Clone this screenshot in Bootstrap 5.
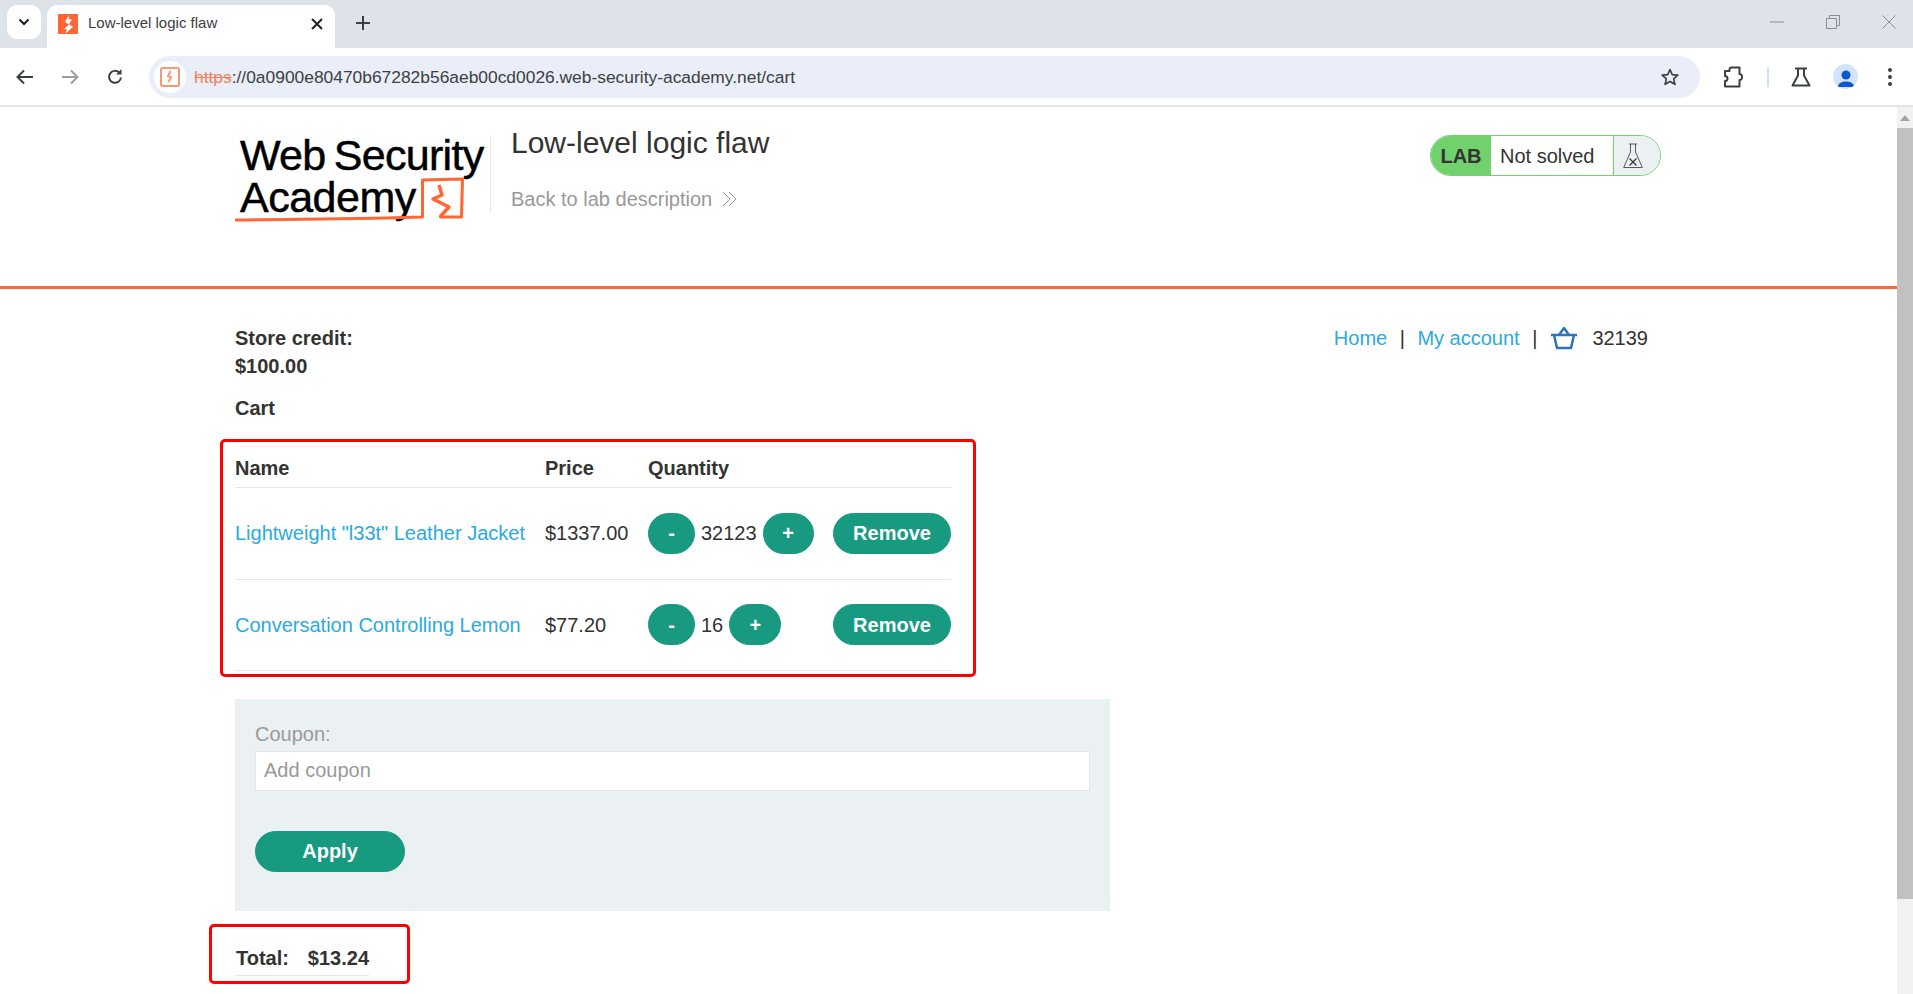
<!DOCTYPE html>
<html lang="en">
<head>
    <meta charset="UTF-8">
    <meta name="viewport" content="width=device-width, initial-scale=1">
    <title>Low-level logic flaw</title>
    <link href="https://cdn.jsdelivr.net/npm/bootstrap@5.3.3/dist/css/bootstrap.min.css" rel="stylesheet">
    <style>
        html, body { height: 100%; overflow: hidden; }
        body { font-family: "Liberation Sans", Arial, sans-serif; font-size: 20px; color: #333332; background: #fff; }

        .tab-strip { height: 48px; background: #dee3ea; padding-left: 7px; }
        .tab-menu { width: 34px; height: 34px; margin-top: 5px; background: #fff; border-radius: 10px; }
        .tab-item { width: 288px; height: 43px; margin-top: 5px; margin-left: 6px; padding: 0 12px 6px 11px; background: #fff; border-radius: 10px 10px 0 0; font-size: 15px; color: #3c4043; }
        .tab-title { margin-left: 10px; }
        .new-tab { margin-left: 21px; margin-top: 5px; height: 36px; }
        .win-btns { margin-left: auto; height: 44px; padding-right: 17px; gap: 42px; }

        .tool-bar { height: 59px; background: #fff; border-bottom: 2px solid #e3e3e3; padding: 0 10px 0 16px; border-radius: 8px 8px 0 0; }
        .nav-icons { gap: 27px; width: 133px; }
        .url-bar { width: 1551px; height: 42px; background: #e9eef8; border-radius: 21px; padding: 0 20px 0 5px; font-size: 17.4px; color: #3c4043; }
        .url-site { width: 32px; height: 32px; border-radius: 50%; background: #fff; margin-right: 8px; }
        .url-text { padding-top: 1px; }
        .url-scheme { color: #f0845c; text-decoration: line-through; }
        .tool-right { margin-left: 23px; gap: 22px; flex: 1; }
        .tool-sep { width: 2px; height: 20px; background: #cfe0f7; }
        .avatar { width: 25px; height: 25px; border-radius: 50%; background: #d3e3fd; overflow: hidden; }

        .page-wrap { height: 887px; }
        .page-main { flex: 1; min-width: 0; }
        .scroll-track { width: 16px; background: #f1f1f1; }
        .scroll-up { height: 21px; }
        .scroll-thumb { height: 771px; background: #c1c1c1; }

        .lab-head { height: 182px; border-bottom: 3px solid #ff6633; padding: 0 235px; }
        .logo-box { width: 255px; margin-top: 25px; height: 95px; }
        .logo-sep { width: 1px; height: 78px; background: #e6e6e6; margin-top: 28px; margin-right: 20px; }
        .lab-title { font-size: 30px; font-weight: 400; margin: 17px 0 0; line-height: 38px; color: #333332; }
        .back-link { color: #999; margin-top: 25px; line-height: 24px; }
        .back-arrows { margin-left: 10px; }
        .lab-status { margin: 28px 1px 0 auto; height: 41px; width: 231px; border: 1px solid #70d16d; border-radius: 21px; overflow: hidden; }
        .lab-tag { width: 60px; background: #70d16d; font-weight: 700; }
        .lab-state { flex: 1; padding-left: 9px; border-right: 1px solid #70d16d; }
        .lab-flask { width: 46px; background: #ebf0f2; padding-right: 9px; }

        .lab-body { padding: 0 235px; }
        .top-row { padding-top: 35px; line-height: 28px; }
        .shop-nav { gap: 12.5px; padding-right: 14px; height: 28px; }
        .shop-nav a, .cart-table a { color: #29abe0; text-decoration: none; }
        .strong-text { font-weight: 700; }
        .cart-title { margin-top: 14px; line-height: 28px; }
        .qty-total { margin-left: 2px; }

        .red-mark { border: 3px solid #f00; border-radius: 5px; }
        .table-mark { width: 756px; margin: 17px 0 0 -15px; padding: 0 22px 3px 12px; }
        .cart-table { --bs-table-color: #333332; margin: 0; width: 100%; vertical-align: middle; }
        .cart-table th, .cart-table td { padding: 0; border-color: #e6e6e6; border-bottom-width: 1px; }
        .cart-table th { height: 45px; padding-bottom: 4px; }
        .name-col { width: 310px; }
        .price-col { width: 103px; }
        .cart-table td { height: 92px; }
        .cart-table tr:last-child td { height: 91px; }
        .qty-cell { gap: 6px; }
        .pill-btn { --bs-btn-color: #fff; --bs-btn-bg: #189a81; --bs-btn-border-color: #189a81; --bs-btn-hover-color: #fff; --bs-btn-hover-bg: #158a73; --bs-btn-font-weight: 700; --bs-btn-font-size: 20px; --bs-btn-padding-y: 0; height: 41px; border-radius: 21px; line-height: 38px; }
        .btn-minus { width: 47px; padding: 0; }
        .btn-plus { width: 51px; padding: 0; }
        .btn-plus-s { width: 52px; padding: 0; }
        .btn-remove { width: 118px; padding: 0; }

        .coupon-box { width: 875px; height: 212px; margin-top: 22px; padding: 21px 20px 0; background: #ebf0f2; }
        .coupon-label { color: #999; line-height: 28px; margin: 0 0 3px; display: block; }
        .coupon-input { height: 40px; border: 1px solid #e6e6e6; border-radius: 0; padding: 0 8px; font-size: 20px; color: #333332; }
        .coupon-input::placeholder { color: #999; }
        .btn-apply { width: 150px; padding: 0; margin-top: 40px; display: block; }

        .total-mark { width: 201px; height: 60px; margin: 13px 0 0 -26px; padding: 17px 0 0 24px; }
        .total-row { width: 133px; line-height: 28px; padding-bottom: 3px; border-bottom: 1px solid #e6e6e6; font-weight: 700; font-size: 20px; }
    </style>
</head>
<body>
    <div class="tab-strip d-flex">
        <div class="tab-menu d-flex align-items-center justify-content-center">
            <svg width="12" height="8" viewBox="0 0 12 8"><path d="M1.5 1.5 6 6l4.5-4.5" fill="none" stroke="#1f1f1f" stroke-width="2"/></svg>
        </div>
        <div class="tab-item d-flex align-items-center">
            <svg width="20" height="20" viewBox="0 0 20 20"><rect width="20" height="20" fill="#ff6633"/><path d="M11 1 7 8l4 2.500L6 15l3 .5-1.500 4L15 13l-4-3 3-4.500-3.500-.5z" fill="#fff"/></svg>
            <span class="tab-title">Low-level logic flaw</span>
            <svg class="ms-auto" width="12" height="12" viewBox="0 0 12 12"><path d="M1 1l10 10M11 1 1 11" stroke="#1f1f1f" stroke-width="2"/></svg>
        </div>
        <div class="new-tab d-flex align-items-center">
            <svg width="14" height="14" viewBox="0 0 14 14"><path d="M7 0v14M0 7h14" stroke="#3c4043" stroke-width="2"/></svg>
        </div>
        <div class="win-btns d-flex align-items-center">
            <svg width="14" height="2" viewBox="0 0 14 2"><path d="M0 1h14" stroke="#8a8d91" stroke-width="1"/></svg>
            <svg width="14" height="14" viewBox="0 0 14 14"><path d="M.5 3.500h10v10H.5zM3.500 3V.5h10v10H11" fill="none" stroke="#8a8d91"/></svg>
            <svg width="14" height="14" viewBox="0 0 14 14"><path d="M.5.5l13 13M13.500.5l-13 13" stroke="#8a8d91"/></svg>
        </div>
    </div>

    <div class="tool-bar d-flex align-items-center">
        <div class="nav-icons d-flex align-items-center">
            <svg width="18" height="16" viewBox="0 0 18 16"><path d="M17 8H2M8 1.500 1.500 8 8 14.500" fill="none" stroke="#3c4043" stroke-width="2"/></svg>
            <svg width="18" height="16" viewBox="0 0 18 16"><path d="M1 8h15M10 1.500 16.500 8 10 14.500" fill="none" stroke="#9a9da1" stroke-width="2"/></svg>
            <svg width="18" height="18" viewBox="0 0 18 18"><path d="M15 9.500A6 6 0 1 1 13.200 4.500" fill="none" stroke="#3c4043" stroke-width="2"/><path d="M15.500 1v5.500H10z" fill="#3c4043"/></svg>
        </div>
        <div class="url-bar d-flex align-items-center">
            <div class="url-site d-flex align-items-center justify-content-center">
                <svg width="20" height="20" viewBox="0 0 20 20"><rect x="1" y="1" width="18" height="18" rx="1.500" fill="none" stroke="#f79a74" stroke-width="2"/><path d="M10.500 4 8 9l3 1.500L8.500 15" fill="none" stroke="#f79a74" stroke-width="2"/></svg>
            </div>
            <span class="url-text"><span class="url-scheme">https</span>://0a0900e80470b67282b56aeb00cd0026.web-security-academy.net/cart</span>
            <svg class="ms-auto" width="20" height="20" viewBox="0 0 24 24"><path d="M12 3l2.700 6.200 6.700.6-5 4.400 1.500 6.600L12 17.300l-5.900 3.500 1.500-6.600-5-4.400 6.700-.6z" fill="none" stroke="#3c4043" stroke-width="2" stroke-linejoin="round"/></svg>
        </div>
        <div class="tool-right d-flex align-items-center">
            <svg width="22" height="22" viewBox="0 0 22 22"><path d="M2 5h4.500V3a2 2 0 0 1 2-1.500h8V8a2.500 2.500 0 0 1 2.500 3 2.500 2.500 0 0 1-2.500 3v6.500H2V15a2.500 2.500 0 0 0 0-5z" fill="none" stroke="#3c4043" stroke-width="2" stroke-linejoin="round"/></svg>
            <div class="tool-sep"></div>
            <svg width="20" height="20" viewBox="0 0 20 20"><path d="M4 1.500h12M7 1.500v7L1.500 18.500h17L13 8.500v-7" fill="none" stroke="#3c4043" stroke-width="2" stroke-linejoin="round"/></svg>
            <div class="avatar d-flex align-items-end justify-content-center">
                <svg width="20" height="22" viewBox="0 0 20 22"><circle cx="10" cy="8" r="4.500" fill="#0b57d0"/><path d="M2 20c0-4 4-5.500 8-5.500s8 1.500 8 5.500z" fill="#0b57d0"/></svg>
            </div>
            <svg class="ms-2" width="4" height="18" viewBox="0 0 4 18"><circle cx="2" cy="2" r="2" fill="#3c4043"/><circle cx="2" cy="9" r="2" fill="#3c4043"/><circle cx="2" cy="16" r="2" fill="#3c4043"/></svg>
        </div>
    </div>

    <div class="page-wrap d-flex">
        <div class="page-main">
            <header class="lab-head d-flex">
                <div class="logo-box">
                    <svg width="255" height="95" viewBox="0 0 255 95">
                        <text x="5" y="38" font-family="'Liberation Sans', sans-serif" font-size="43" fill="#000" stroke="#000" stroke-width=".5" letter-spacing="-.7" word-spacing="-3">Web Security</text>
                        <text x="5" y="80" font-family="'Liberation Sans', sans-serif" font-size="43" fill="#000" stroke="#000" stroke-width=".5" letter-spacing="-.5">Academy</text>
                        <path d="M1 88c50-1 130-1 186.500-3V48l40-1 -1 38h-21" fill="none" stroke="#ff6633" stroke-width="3" stroke-linecap="round" stroke-linejoin="round"/>
                        <path d="M204 53l3 10-9 4 16 8-9 10" fill="none" stroke="#ff6633" stroke-width="3.500" stroke-linejoin="round"/>
                    </svg>
                </div>
                <div class="logo-sep"></div>
                <div>
                    <h2 class="lab-title">Low-level logic flaw</h2>
                    <div class="back-link d-flex align-items-center">
                        Back to lab description
                        <svg class="back-arrows" width="16" height="16" viewBox="0 0 16 16"><path d="M1 1l7 7-7 7M7 1l7 7-7 7" fill="none" stroke="#999" stroke-width="1"/></svg>
                    </div>
                </div>
                <div class="lab-status d-flex">
                    <div class="lab-tag d-flex align-items-center justify-content-center">LAB</div>
                    <div class="lab-state d-flex align-items-center">Not solved</div>
                    <div class="lab-flask d-flex align-items-center justify-content-center">
                        <svg width="20" height="26" viewBox="0 0 20 26"><path d="M6 1h8M7.500 1v8L.7 24.500h18.600L12.500 9V1" fill="none" stroke="#333332" stroke-width=".8" stroke-linejoin="round"/><path d="M6.500 15.500l7 7M13.500 15.500l-7 7" stroke="#333332" stroke-width="1.200"/></svg>
                    </div>
                </div>
            </header>

            <main class="lab-body">
                <div class="top-row d-flex justify-content-between">
                    <div class="strong-text">Store credit:<br>$100.00</div>
                    <nav class="shop-nav d-flex align-items-center">
                        <a href="#">Home</a><span>|</span><a href="#">My account</a><span>|</span>
                        <svg width="28" height="24" viewBox="0 0 28 24"><path d="M1 9h26M4 9l3 13h14l3-13M9 9l5-7 5 7" fill="none" stroke="#2f72b9" stroke-width="2.500" stroke-linejoin="round"/></svg>
                        <span class="qty-total">32139</span>
                    </nav>
                </div>
                <div class="cart-title strong-text">Cart</div>

                <div class="red-mark table-mark">
                    <table class="table cart-table">
                        <thead>
                            <tr><th class="name-col">Name</th><th class="price-col">Price</th><th>Quantity</th><th></th></tr>
                        </thead>
                        <tbody>
                            <tr>
                                <td><a href="#">Lightweight "l33t" Leather Jacket</a></td>
                                <td>$1337.00</td>
                                <td><div class="qty-cell d-flex align-items-center"><button class="btn pill-btn btn-minus">-</button><span>32123</span><button class="btn pill-btn btn-plus">+</button></div></td>
                                <td class="text-end"><button class="btn pill-btn btn-remove">Remove</button></td>
                            </tr>
                            <tr>
                                <td><a href="#">Conversation Controlling Lemon</a></td>
                                <td>$77.20</td>
                                <td><div class="qty-cell d-flex align-items-center"><button class="btn pill-btn btn-minus">-</button><span>16</span><button class="btn pill-btn btn-plus-s">+</button></div></td>
                                <td class="text-end"><button class="btn pill-btn btn-remove">Remove</button></td>
                            </tr>
                        </tbody>
                    </table>
                </div>

                <form class="coupon-box">
                    <label class="coupon-label" for="coupon">Coupon:</label>
                    <input id="coupon" class="form-control coupon-input" type="text" placeholder="Add coupon">
                    <button type="button" class="btn pill-btn btn-apply">Apply</button>
                </form>

                <div class="red-mark total-mark">
                    <div class="total-row d-flex justify-content-between"><span>Total:</span><span>$13.24</span></div>
                </div>
            </main>
        </div>
        <div class="scroll-track">
            <div class="scroll-up d-flex align-items-center justify-content-center">
                <svg width="10" height="6" viewBox="0 0 10 6"><path d="M5 0l5 6H0z" fill="#a3a3a3"/></svg>
            </div>
            <div class="scroll-thumb"></div>
        </div>
    </div>

    <script src="https://cdn.jsdelivr.net/npm/bootstrap@5.3.3/dist/js/bootstrap.bundle.min.js"></script>
</body>
</html>
